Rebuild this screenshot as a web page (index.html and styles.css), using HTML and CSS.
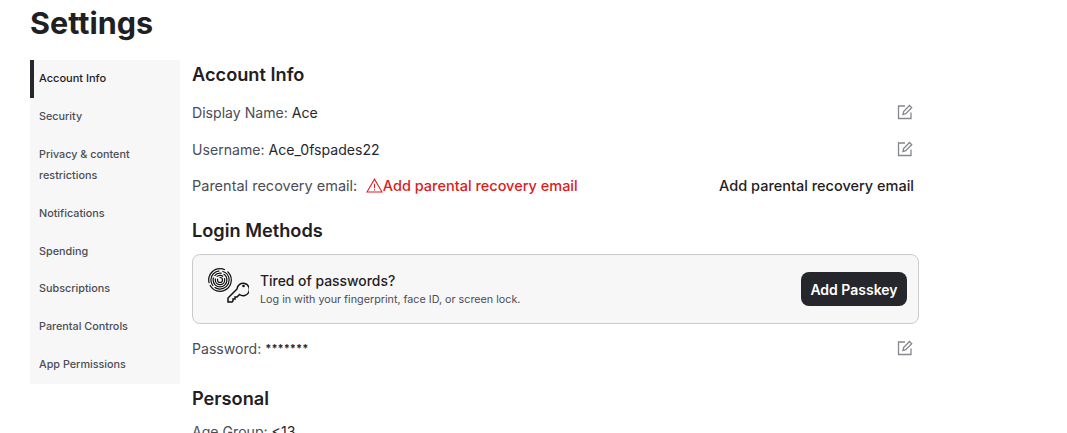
FILE: index.html

```html
<!DOCTYPE html>
<html lang="en">
<head>
  <meta charset="UTF-8" />
  <title>Settings</title>
  <link rel="stylesheet" href="styles.css">
</head>
<body>
  <div class="container">
    <h1>Settings</h1>
    <div class="flex">
      <nav class="side-nav">
        <a class="nav-item active">Account Info</a>
        <a class="nav-item">Security</a>
        <a class="nav-item">Privacy &amp; content restrictions</a>
        <a class="nav-item">Notifications</a>
        <a class="nav-item">Spending</a>
        <a class="nav-item">Subscriptions</a>
        <a class="nav-item">Parental Controls</a>
        <a class="nav-item">App Permissions</a>
      </nav>
      <main class="content">
        <h2>Account Info</h2>
        <div class="row row-first">
          <span>Display Name: <span class="value">Ace</span></span>
          <svg class="edit-icon" viewBox="0 0 16 16"><path d="M14 8.500V14.500H1.500V2H8M6 10.500l.6-3L12.500 1.500l2.200 2.200-6 5.900z"/></svg>
        </div>
        <div class="row row-username">
          <span>Username: <span class="value">Ace_0fspades22</span></span>
          <svg class="edit-icon" viewBox="0 0 16 16"><path d="M14 8.500V14.500H1.500V2H8M6 10.500l.6-3L12.500 1.500l2.200 2.200-6 5.900z"/></svg>
        </div>
        <div class="row row-parental">
          <span class="parental">Parental recovery email:
            <svg class="warn-icon" viewBox="0 0 18 16"><path d="M9 1.200 1 15h16zM9 6v5M9 12v1.400"/></svg><span class="warn-text">Add parental recovery email</span>
          </span>
          <a class="row-link">Add parental recovery email</a>
        </div>

        <h2 class="section">Login Methods</h2>
        <div class="passkey-card">
          <svg class="passkey-icon" viewBox="0 0 41 40">
            <g class="print">
              <circle cx="12" cy="13" r="11.300" stroke-dasharray="30 2 26 3" />
              <circle cx="12" cy="13" r="9.100" stroke-dasharray="20 2 20 3" />
              <circle cx="12" cy="13" r="6.900" stroke-dasharray="24 2 8 2" />
              <circle cx="12" cy="13" r="4.700" stroke-dasharray="16 2 7 2" />
              <circle cx="12" cy="13" r="2.500" stroke-dasharray="9 2" />
            </g>
            <path class="key" d="M29 22 20 31v4h4l1-1v-2h2v-2h2l2.500-2.500A6.200 6.200 0 1 0 29 22z"/>
            <circle class="key-hole" cx="35.500" cy="19" r="1.300"/>
          </svg>
          <div class="passkey-text">
            <div class="passkey-title">Tired of passwords?</div>
            <div class="passkey-sub">Log in with your fingerprint, face ID, or screen lock.</div>
          </div>
          <button>Add Passkey</button>
        </div>
        <div class="row row-password">
          <span>Password: <span class="value stars">*******</span></span>
          <svg class="edit-icon" viewBox="0 0 16 16"><path d="M14 8.500V14.500H1.500V2H8M6 10.500l.6-3L12.500 1.500l2.200 2.200-6 5.900z"/></svg>
        </div>

        <h2 class="section section-personal">Personal</h2>
        <div class="row row-age">
          <span>Age Group: <span class="value">&lt;13</span></span>
        </div>
      </main>
    </div>
  </div>
</body>
</html>
```

FILE: styles.css

```css
html, body {
  height: 433px;
  overflow: hidden;
}
body {
  font-family: Inter, "Noto Sans", sans-serif;
  background-color: white;
  color: #1f2024;
  margin: 0;
}
.container {
  width: 889px;
  padding: 0 0 0 30px;
}
h1 {
  font-size: 30.500px;
  line-height: 36px;
  font-weight: 700;
  margin: 0;
  padding: 5px 0 19px;
}
.flex {
  display: flex;
  gap: 12px;
  align-items: flex-start;
}
.side-nav {
  flex: 0 0 150px;
  background-color: #f7f7f8;
  display: flex;
  flex-direction: column;
  padding-bottom: 0.600px;
}
.nav-item {
  display: block;
  padding: 8.400px 9px;
  font-size: 10.800px;
  line-height: 21px;
  font-weight: 500;
  color: #4b4d55;
}
.nav-item.active {
  color: #1f2024;
  font-size: 11px;
  border-left: 4px solid #26272d;
  padding-left: 5px;
}
.content {
  flex: 1;
}
h2 {
  font-size: 18.200px;
  line-height: 24px;
  font-weight: 600;
  margin: 0;
  padding-top: 2px;
}
h2.section {
  margin-top: 21px;
}
h2.section-personal {
  margin-top: 26px;
}
.row {
  display: flex;
  align-items: center;
  justify-content: space-between;
  height: 20px;
  margin-top: 16.500px;
  font-size: 14.100px;
  color: #4b4d55;
  padding-right: 6px;
}
.row-first {
  margin-top: 16px;
}
.row-username {
  margin-top: 17px;
}
.row-parental {
  margin-top: 16px;
  font-size: 14.500px;
  padding-right: 5px;
}
.value {
  color: #26272d;
}
.stars {
  font-size: 11px;
  font-weight: 700;
  position: relative;
  top: -2px;
}
.edit-icon {
  width: 16px;
  height: 16px;
  fill: none;
  stroke: #85878d;
  stroke-width: 1.300;
}
.parental {
  display: flex;
  align-items: center;
}
.warn-icon {
  width: 17px;
  height: 15px;
  margin-left: 8.500px;
  fill: none;
  stroke: #e01f1f;
  stroke-width: 1.100;
}
.warn-text {
  color: #d92020;
  font-weight: 500;
}
.row-link {
  color: #1f2024;
  font-weight: 500;
}
.passkey-card {
  display: flex;
  align-items: center;
  height: 68px;
  margin-top: 12px;
  padding: 0 11px 0 15px;
  background-color: #f7f7f8;
  border: 1px solid #c9cacd;
  border-radius: 8px;
}
.passkey-icon {
  width: 41px;
  height: 40px;
  margin-right: 11px;
  margin-bottom: 4px;
  fill: none;
  stroke: #111;
}
.print circle {
  stroke-width: 1.200;
}
.key {
  stroke-width: 1.500;
}
.key-hole {
  fill: #111;
  stroke: none;
}
.passkey-text {
  flex: 1;
  padding-top: 2px;
}
.passkey-title {
  font-size: 13.900px;
  line-height: 19px;
  font-weight: 500;
}
.passkey-sub {
  font-size: 10.750px;
  line-height: 17px;
  color: #4b4d55;
}
button {
  font-family: inherit;
  background-color: #26272d;
  color: white;
  height: 34px;
  width: 106px;
  border: none;
  border-radius: 8px;
  font-size: 14px;
  font-weight: 600;
  padding: 0;
}
.row-password {
  margin-top: 14px;
}
.row-age {
  margin-top: 11px;
}
```
